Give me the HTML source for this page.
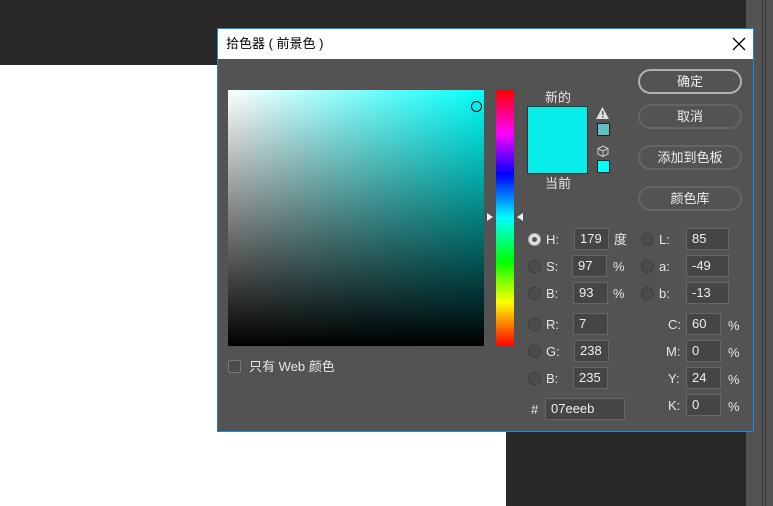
<!DOCTYPE html>
<html><head><meta charset="utf-8"><style>
*{margin:0;padding:0;box-sizing:border-box}
body{width:773px;height:506px;overflow:hidden;position:relative;background:#fff;font-family:"Liberation Sans","Noto Sans CJK SC",sans-serif;font-size:13px;color:#ddd}
.a{position:absolute}
.btn{position:absolute;left:638px;width:104px;height:25px;border:2px solid #646464;border-radius:13px;text-align:center;line-height:21px;color:#eee;font-size:13px}
.inp{position:absolute;height:22px;background:#454545;border:1px solid #666;color:#eee;font-size:13px;line-height:20px;padding-left:5px}
.rd{position:absolute;width:13px;height:13px;border-radius:50%;border:1px solid #3f3f3f;background:#4c4c4c}
.lb{position:absolute;color:#e6e6e6;font-size:13px;line-height:16px}
</style></head><body>
<div class="a" style="left:0;top:0;width:746px;height:65px;background:#282828"></div>
<div class="a" style="left:506px;top:65px;width:240px;height:441px;background:#282828"></div>
<div class="a" style="left:746px;top:0;width:27px;height:506px;background:#535353"></div>
<div class="a" style="left:762px;top:0;width:1px;height:506px;background:#3a3a3a"></div>
<div class="a" style="left:765px;top:0;width:1px;height:506px;background:#3a3a3a"></div>
<div class="a" style="left:217px;top:28px;width:537px;height:404px;border:1px solid #1e88e5;background:#535353">
 <div class="a" style="left:0;top:0;width:535px;height:30px;background:#fff;color:#000;font-size:13px;line-height:30px;padding-left:8px">拾色器 ( 前景色 )</div>
 <svg class="a" style="left:514px;top:8px" width="14" height="14"><path d="M1 1L13 13M13 1L1 13" stroke="#000" stroke-width="1.3"/></svg>
</div>
<div class="a" style="left:228px;top:90px;width:256px;height:256px;background:linear-gradient(to bottom,rgba(0,0,0,0),#000),linear-gradient(to right,#fff,#00fffb)"></div>
<div class="a" style="left:471px;top:101px;width:11px;height:11px;border-radius:50%;border:1px solid #000"></div>
<div class="a" style="left:496px;top:90px;width:18px;height:256px;background:linear-gradient(to bottom,#f00 0%,#f0f 17%,#00f 33%,#0ff 50%,#0f0 67%,#ff0 83%,#f00 100%)"></div>
<div class="a" style="left:487px;top:213px;width:0;height:0;border-top:4px solid transparent;border-bottom:4px solid transparent;border-left:6px solid #eee"></div>
<div class="a" style="left:517px;top:213px;width:0;height:0;border-top:4px solid transparent;border-bottom:4px solid transparent;border-right:6px solid #eee"></div>
<div class="lb" style="left:545px;top:90px">新的</div>
<div class="a" style="left:527px;top:106px;width:61px;height:68px;background:#07eeeb;border:1px solid #333"></div>
<div class="lb" style="left:545px;top:176px">当前</div>
<svg class="a" style="left:596px;top:107px" width="13" height="12"><path d="M6.5 0L13 12H0Z" fill="#ddd"/><rect x="6" y="4" width="1.5" height="4" fill="#535353"/><rect x="6" y="9" width="1.5" height="1.5" fill="#535353"/></svg>
<div class="a" style="left:597px;top:123px;width:13px;height:13px;background:#5fbfc6;border:1px solid #222"></div>
<svg class="a" style="left:597px;top:145px" width="12" height="12"><path d="M6 1L11 3.5V9L6 11.5L1 9V3.5ZM1 3.5L6 6L11 3.5M6 6V11.5" fill="none" stroke="#ccc" stroke-width="1"/></svg>
<div class="a" style="left:597px;top:160px;width:13px;height:13px;background:#00ffff;border:1px solid #222"></div>
<div class="btn" style="top:69px;border-color:#b0b0b0">确定</div>
<div class="btn" style="top:104px">取消</div>
<div class="btn" style="top:145px">添加到色板</div>
<div class="btn" style="top:186px">颜色库</div>
<div class="rd" style="left:528px;top:233px;background:#ddd;border-color:#aaa"><div class="a" style="left:3px;top:3px;width:5px;height:5px;border-radius:50%;background:#555"></div></div>
<div class="rd" style="left:528px;top:260px"></div>
<div class="rd" style="left:528px;top:287px"></div>
<div class="rd" style="left:528px;top:318px"></div>
<div class="rd" style="left:528px;top:345px"></div>
<div class="rd" style="left:528px;top:372px"></div>
<div class="rd" style="left:641px;top:233px"></div>
<div class="rd" style="left:641px;top:260px"></div>
<div class="rd" style="left:641px;top:287px"></div>
<div class="lb" style="left:546px;top:232px">H:</div>
<div class="lb" style="left:546px;top:259px">S:</div>
<div class="lb" style="left:546px;top:286px">B:</div>
<div class="lb" style="left:546px;top:317px">R:</div>
<div class="lb" style="left:546px;top:344px">G:</div>
<div class="lb" style="left:546px;top:371px">B:</div>
<div class="lb" style="left:531px;top:402px">#</div>
<div class="inp" style="left:574px;top:228px;width:35px">179</div>
<div class="inp" style="left:572px;top:255px;width:35px">97</div>
<div class="inp" style="left:573px;top:282px;width:35px">93</div>
<div class="inp" style="left:573px;top:313px;width:35px">7</div>
<div class="inp" style="left:574px;top:340px;width:35px">238</div>
<div class="inp" style="left:573px;top:367px;width:35px">235</div>
<div class="inp" style="left:545px;top:398px;width:80px">07eeeb</div>
<div class="lb" style="left:614px;top:232px">度</div>
<div class="lb" style="left:613px;top:259px">%</div>
<div class="lb" style="left:613px;top:286px">%</div>
<div class="lb" style="left:659px;top:232px">L:</div>
<div class="lb" style="left:659px;top:259px">a:</div>
<div class="lb" style="left:659px;top:286px">b:</div>
<div class="inp" style="left:686px;top:228px;width:43px">85</div>
<div class="inp" style="left:686px;top:255px;width:43px">-49</div>
<div class="inp" style="left:686px;top:282px;width:43px">-13</div>
<div class="lb" style="left:668px;top:317px">C:</div>
<div class="lb" style="left:666px;top:344px">M:</div>
<div class="lb" style="left:668px;top:371px">Y:</div>
<div class="lb" style="left:668px;top:398px">K:</div>
<div class="inp" style="left:686px;top:313px;width:35px">60</div>
<div class="inp" style="left:686px;top:340px;width:35px">0</div>
<div class="inp" style="left:686px;top:367px;width:35px">24</div>
<div class="inp" style="left:686px;top:394px;width:35px">0</div>
<div class="lb" style="left:728px;top:318px">%</div>
<div class="lb" style="left:728px;top:345px">%</div>
<div class="lb" style="left:728px;top:372px">%</div>
<div class="lb" style="left:728px;top:399px">%</div>
<div class="a" style="left:228px;top:360px;width:13px;height:13px;border:1px solid #777;border-radius:2px;background:#4c4c4c"></div>
<div class="lb" style="left:249px;top:359px">只有 Web 颜色</div>
</body></html>
